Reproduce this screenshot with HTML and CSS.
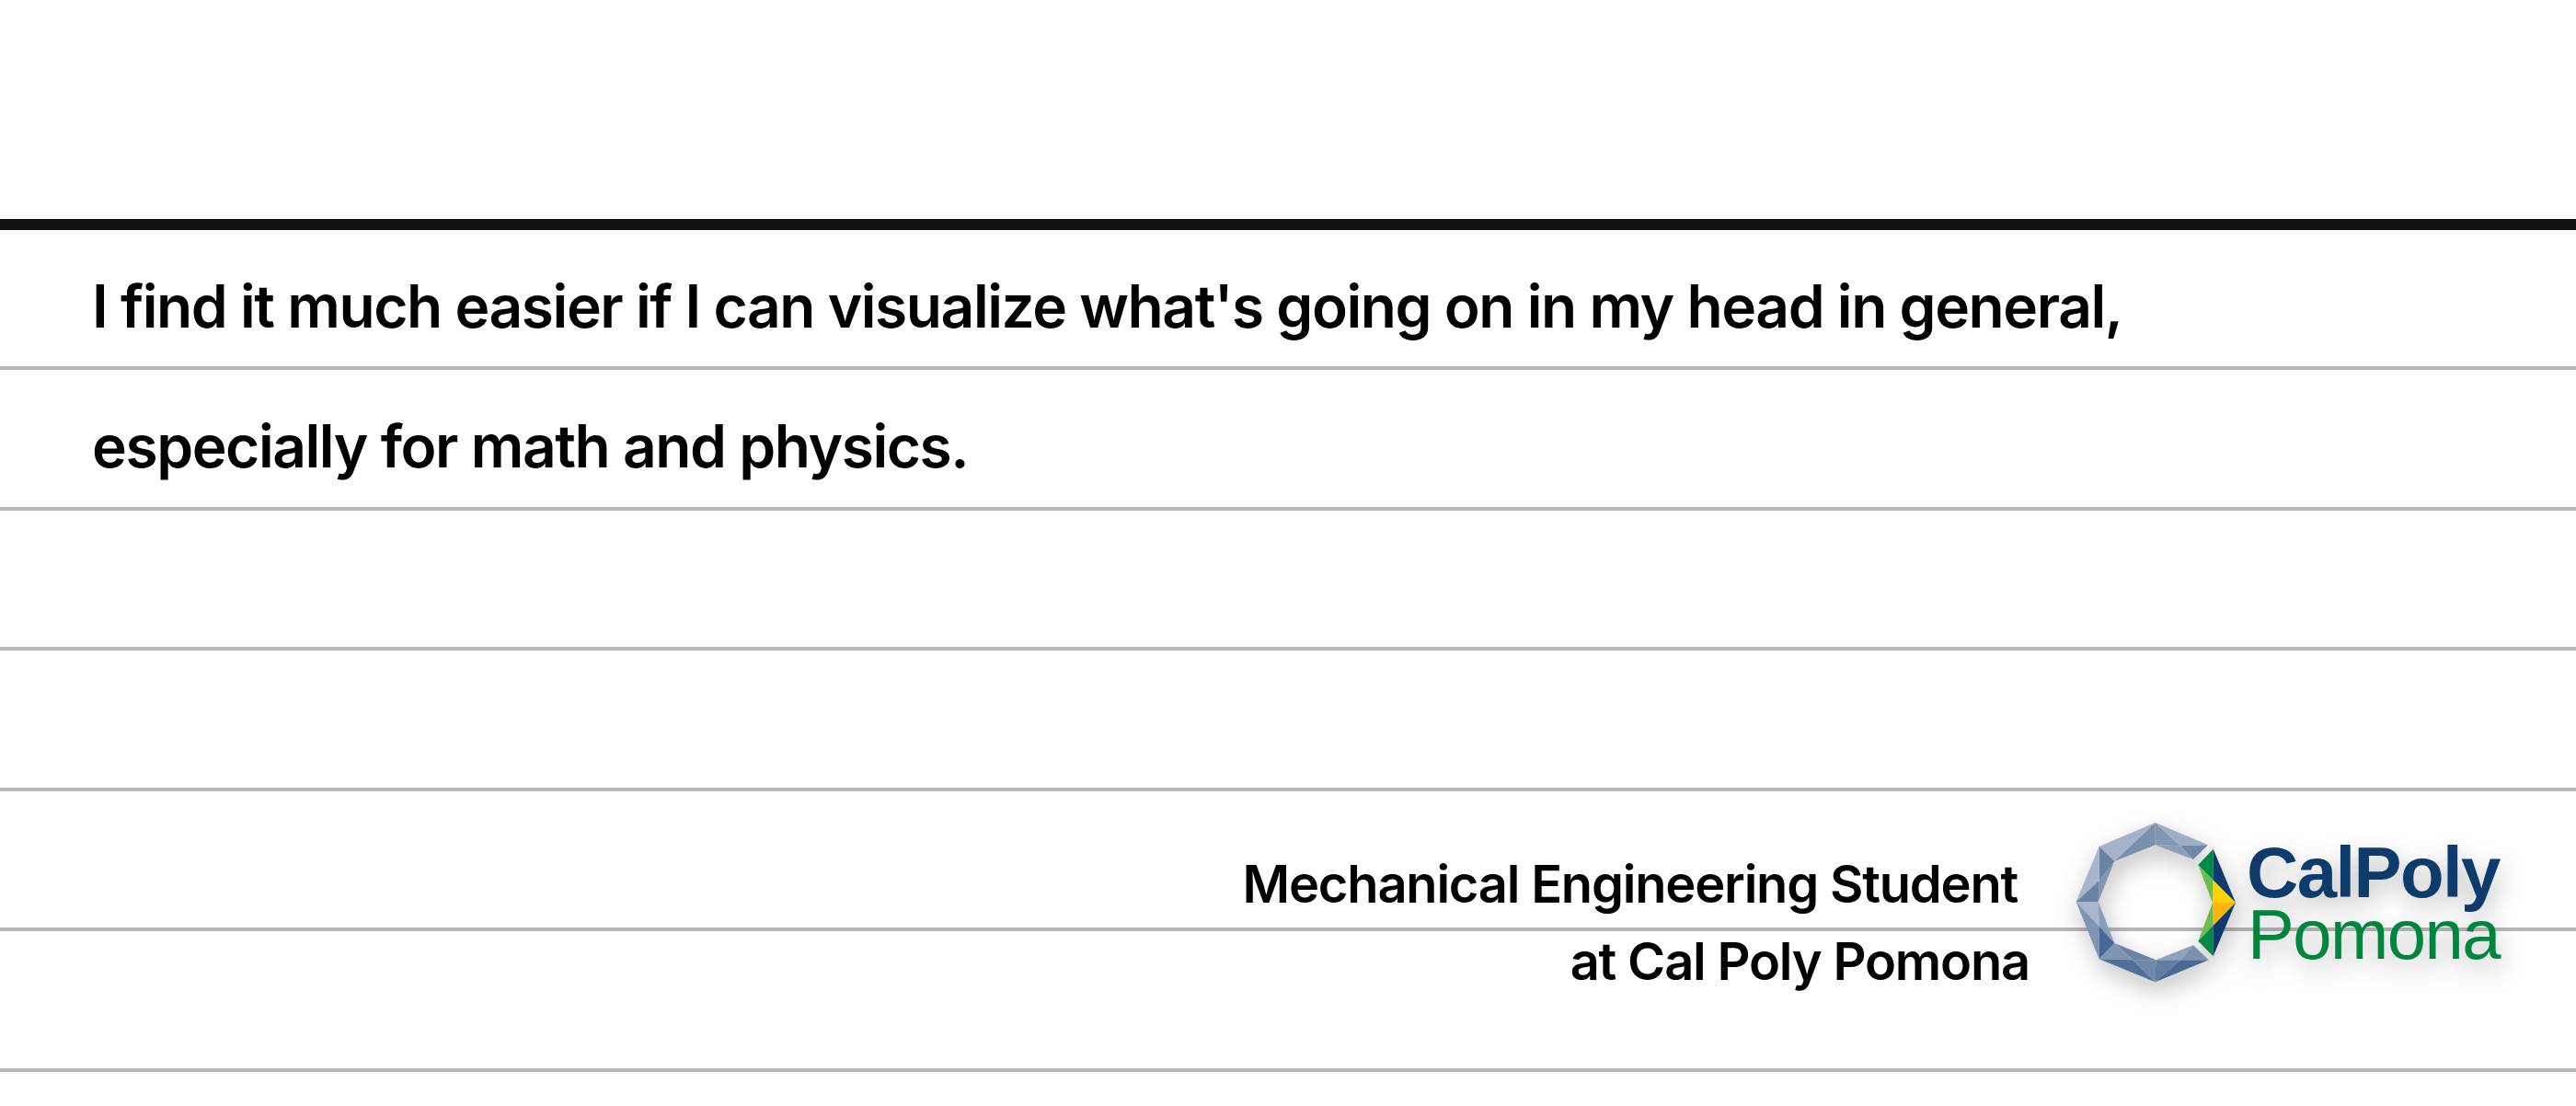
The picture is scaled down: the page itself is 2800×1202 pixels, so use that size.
FILE: index.html
```html
<!DOCTYPE html>
<html lang="en">
<head>
<meta charset="utf-8">
<title>Quote</title>
<link rel="stylesheet" href="styles.css">
</head>
<body>
<main class="sheet">
  <div class="rule"></div>
  <section class="lines">
    <p class="line">I find it much easier if I can visualize what's going on in my head in general,</p>
    <p class="line">especially for math and physics.</p>
    <p class="line"></p>
    <p class="line"></p>
    <p class="line"></p>
    <p class="line"></p>
  </section>
  <aside class="credit">
    <div class="who">
      <div>Mechanical Engineering Student&nbsp;</div>
      <div>at Cal Poly Pomona</div>
    </div>
    <svg class="logo" viewBox="0 0 500 210" width="500" height="210" role="img" aria-label="Cal Poly Pomona">
      <g transform="scale(.33333)">
        <polygon fill="#a3b3c9" points="125,120 308,42 175,168"/>
        <polygon fill="#7a91ae" points="308,42 308,115 175,168"/>
        <polygon fill="#8097b3" points="308,42 390,118 308,115"/>
        <polygon fill="#9dafc6" points="308,42 480,115 390,118"/>
        <polygon fill="#7087a7" points="390,118 480,115 432,162"/>
        <polygon fill="#8b9fba" points="308,115 390,118 432,162"/>
        <polygon fill="#6b84a4" points="125,120 175,168 125,232"/>
        <polygon fill="#a5b5ca" points="125,120 125,232 50,300"/>
        <polygon fill="#7f96b2" points="125,232 175,168 122,300"/>
        <polygon fill="#6b84a4" points="50,300 125,232 122,300"/>
        <polygon fill="#a8b7cb" points="50,300 122,300 125,380"/>
        <polygon fill="#7f95b1" points="50,300 125,380 125,487"/>
        <polygon fill="#8a9eb8" points="122,300 175,435 125,380"/>
        <polygon fill="#466894" points="125,380 175,435 125,487"/>
        <polygon fill="#7f96b2" points="125,487 175,435 235,490"/>
        <polygon fill="#517099" points="125,487 235,490 308,562"/>
        <polygon fill="#6a84a4" points="175,435 310,490 235,490"/>
        <polygon fill="#6f88a8" points="235,490 310,490 308,562"/>
        <polygon fill="#5f7da0" points="310,490 390,490 308,562"/>
        <polygon fill="#486b96" points="390,490 482,490 308,562"/>
        <polygon fill="#8ea2bc" points="310,490 432,442 390,490"/>
        <polygon fill="#7a92af" points="432,442 482,490 390,490"/>
        <polygon fill="#008a45" points="497,128 448,180 497,230"/>
        <polygon fill="#0c3b6c" points="497,128 570,303 497,230"/>
        <polygon fill="#6cbd4a" points="448,180 497,230 495,303"/>
        <polygon fill="#ffd200" points="497,230 570,303 495,303"/>
        <polygon fill="#fdb515" points="495,303 570,303 497,378"/>
        <polygon fill="#6cbd4a" points="495,303 497,378 448,428"/>
        <polygon fill="#008a45" points="448,428 497,378 497,478"/>
        <polygon fill="#0c3b6c" points="497,378 570,303 497,478"/>
      </g>
      <text class="logo-cal" x="202" y="95">CalPoly</text>
      <text class="logo-pomona" x="203" y="162">Pomona</text>
    </svg>
  </aside>
</main>
</body>
</html>
```

FILE: styles.css
```css
html, body {
  margin: 0;
  padding: 0;
  background: #fff;
}

.sheet {
  position: relative;
  width: 2800px;
  height: 1202px;
  overflow: hidden;
  padding-top: 238px;
  box-sizing: border-box;
  font-family: "Inter", "Liberation Sans", sans-serif;
  color: #000;
}

.rule {
  height: 11.5px;
  background: #111;
}

.lines {
  display: grid;
  grid-auto-rows: 152.5px;
}

.line {
  margin: 0;
  box-sizing: border-box;
  padding: 0 0 0 100px;
  border-bottom: 4px solid #b7b7b7;
  font-size: 64px;
  font-weight: 570;
  letter-spacing: -1.43px;
  line-height: 166px;
  white-space: nowrap;
}

.credit {
  position: absolute;
  top: 880px;
  left: 1340px;
  display: flex;
  align-items: flex-start;
}

.who {
  width: 866px;
  padding-top: 39px;
  text-align: right;
  font-size: 56px;
  font-weight: 570;
  letter-spacing: -1.2px;
  line-height: 84px;
  white-space: nowrap;
}

.logo {
  display: block;
  margin-left: 34px;
  overflow: visible;
  filter: drop-shadow(3px 10px 13px rgba(0, 0, 0, .26));
}

.logo-cal {
  font-family: "Liberation Sans", sans-serif;
  font-size: 78px;
  font-weight: 700;
  letter-spacing: -1.6px;
  fill: #0c3b6c;
}

.logo-pomona {
  font-family: "Liberation Sans", sans-serif;
  font-size: 76px;
  letter-spacing: -1.5px;
  fill: #00853f;
}
```
